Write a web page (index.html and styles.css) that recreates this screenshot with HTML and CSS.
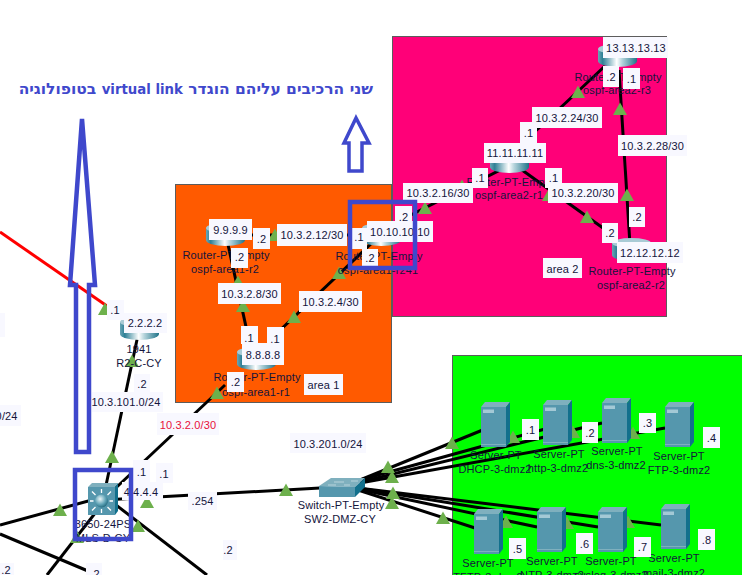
FILE: index.html
```html
<!DOCTYPE html>
<html lang="he">
<head>
<meta charset="utf-8">
<title>OSPF virtual link topology</title>
<link rel="stylesheet" href="styles.css">
</head>
<body>
<svg class="canvas" xmlns="http://www.w3.org/2000/svg" width="742" height="575" viewBox="0 0 742 575">
  <defs>
    <linearGradient id="cyl" x1="0" x2="1" y1="0" y2="0">
      <stop offset="0" stop-color="#6aa6b6"/>
      <stop offset="0.12" stop-color="#2f8096"/>
      <stop offset="0.48" stop-color="#ffffff"/>
      <stop offset="0.62" stop-color="#b5d4dc"/>
      <stop offset="1" stop-color="#1f7389"/>
    </linearGradient>
    <radialGradient id="ball" cx="0.4" cy="0.35" r="0.7">
      <stop offset="0" stop-color="#e8f4f7"/>
      <stop offset="0.6" stop-color="#5fa3b6"/>
      <stop offset="1" stop-color="#1f6479"/>
    </radialGradient>
    <symbol id="router" width="39" height="24" viewBox="0 0 39 24">
      <path class="cyl-body" d="M0 5V17A19.5 6 0 0 0 39 17V5Z"/>
      <ellipse class="cyl-top" cx="19.5" cy="5" rx="19.5" ry="5"/>
    </symbol>
    <symbol id="server" width="29" height="46" viewBox="0 0 29 46">
      <path class="face-top" d="M0 5L4 0H29L25 5Z"/>
      <path class="face-side" d="M25 5L29 0V40L25 45Z"/>
      <rect class="face-front" x="0" y="5" width="25" height="40"/>
      <rect class="face-shine" x="2" y="7.500" width="11" height="3.500"/>
      <rect class="face-strip" x="0" y="42" width="25" height="1"/>
    </symbol>
    <symbol id="tri" class="tri-sym" width="12" height="11" viewBox="0 0 12 11">
      <path class="tri" d="M6 -1.500L13 11H-1Z"/>
    </symbol>
  </defs>

  <!-- Area boxes -->
  <rect class="area area-pink" x="392.500" y="36.500" width="274" height="280"/>
  <rect class="area area-orange" x="175.500" y="184.500" width="216" height="218"/>
  <rect class="area area-green" x="452.500" y="355.500" width="295" height="225"/>

  <!-- Links -->
  <g class="links">
    <line class="red" x1="0" y1="232" x2="107" y2="306"/>
    <line x1="605" y1="66" x2="510" y2="155"/>
    <line x1="619" y1="70" x2="630" y2="245"/>
    <line x1="515" y1="165" x2="603" y2="228"/>
    <line x1="510" y1="165" x2="385" y2="228"/>
    <line x1="228" y1="235" x2="380" y2="235"/>
    <line x1="227" y1="240" x2="250" y2="345"/>
    <line x1="275" y1="335" x2="375" y2="240"/>
    <line x1="225" y1="385" x2="103" y2="500"/>
    <line x1="138" y1="335" x2="105" y2="490"/>
    <line x1="103" y1="500" x2="320" y2="488"/>
    <line x1="0" y1="525" x2="103" y2="497"/>
    <line x1="0" y1="534" x2="88" y2="571"/>
    <line x1="47" y1="575" x2="103" y2="503"/>
    <line x1="103" y1="495" x2="207" y2="575"/>
    <line x1="360" y1="480" x2="495" y2="425"/>
    <line x1="360" y1="480" x2="545" y2="429"/>
    <line x1="360" y1="482" x2="602" y2="423"/>
    <line x1="360" y1="483" x2="665" y2="428"/>
    <line x1="358" y1="490" x2="475" y2="528"/>
    <line x1="358" y1="489" x2="537" y2="527"/>
    <line x1="358" y1="488" x2="598" y2="527"/>
    <line x1="358" y1="488" x2="661" y2="525"/>
  </g>

  <!-- Link status markers -->
  <g>
    <use href="#tri" x="572" y="87"/>
    <use href="#tri" x="614" y="104"/>
    <use href="#tri" x="621" y="190"/>
    <use href="#tri" x="581" y="212"/>
    <use href="#tri" x="419" y="203"/>
    <use href="#tri" x="456" y="181"/>
    <use href="#tri" x="543" y="190"/>
    <use href="#tri" x="333" y="268"/>
    <use href="#tri" x="232" y="277"/>
    <use href="#tri" x="237" y="301"/>
    <use href="#tri" x="288" y="312"/>
    <use href="#tri" x="269" y="230"/>
    <use href="#tri" x="211" y="388"/>
    <use href="#tri" x="99" y="304"/>
    <use href="#tri" x="126" y="356"/>
    <use href="#tri" x="106" y="452"/>
    <use href="#tri" x="54" y="505"/>
    <use href="#tri" x="132" y="521"/>
    <use href="#tri" x="71" y="532"/>
    <use href="#tri" x="131" y="462"/>
    <use href="#tri" x="141" y="497"/>
    <use href="#tri" x="280" y="485"/>
    <use href="#tri" x="446" y="438"/>
    <use href="#tri" x="382" y="462"/>
    <use href="#tri" x="386" y="472"/>
    <use href="#tri" x="387" y="488"/>
    <use href="#tri" x="386" y="498"/>
    <use href="#tri" x="437" y="513"/>
    <use href="#tri" x="507" y="432"/>
    <use href="#tri" x="567" y="427"/>
    <use href="#tri" x="627" y="428"/>
    <use href="#tri" x="500" y="517"/>
    <use href="#tri" x="561" y="518"/>
    <use href="#tri" x="622" y="517"/>
  </g>

  <!-- Routers -->
  <use href="#router" x="598" y="44"/>
  <use href="#router" x="490" y="150"/>
  <use href="#router" x="612" y="238"/>
  <use href="#router" x="362" y="223"/>
  <use href="#router" x="206" y="223"/>
  <use href="#router" x="237" y="347"/>
  <use href="#router" x="120" y="317"/>

  <!-- Multilayer switch -->
  <g>
    <path class="face-top" d="M88 487L92 483H118L115 487Z"/>
    <path class="face-side" d="M115 487L118 483V511L115 515Z"/>
    <rect class="face-front" x="88" y="487" width="27" height="28"/>
    <circle class="ball" cx="101.500" cy="501" r="6.500"/>
    <g class="rays">
      <path d="M101.500 493V489M101.500 509V513M93.500 501H90M109.500 501H113M95.500 495L92 491.500M107.500 495L111 491.500M95.500 507L92 510.500M107.500 507L111 510.500"/>
    </g>
  </g>

  <!-- Switch -->
  <g>
    <path class="face-top" d="M319 486L331 478H365L355 487Z"/>
    <path class="face-side" d="M355 487L365 478V487L355 497Z"/>
    <path class="face-front" d="M319 486L355 487V497H319Z"/>
    <path class="sw-ports" d="M334 482H344M351 481H358M328 485H336M344 485H350"/>
  </g>

  <!-- Servers -->
  <use href="#server" x="481" y="402"/>
  <use href="#server" x="543" y="400"/>
  <use href="#server" x="602" y="398"/>
  <use href="#server" x="665" y="402"/>
  <use href="#server" x="474" y="509"/>
  <use href="#server" x="537" y="507"/>
  <use href="#server" x="598" y="507"/>
  <use href="#server" x="661" y="504"/>

  <!-- Device names -->
  <g class="name">
    <text x="618" y="81">Router-PT-Empty</text>
    <text x="617" y="94">ospf-area2-r3</text>
    <text x="510" y="186">Router-PT-Empty</text>
    <text x="509" y="199">ospf-area2-r1</text>
    <text x="632" y="275">Router-PT-Empty</text>
    <text x="631" y="289">ospf-area2-r2</text>
    <text x="226" y="259">Router-PT-Empty</text>
    <text x="225" y="273">ospf-area1-r2</text>
    <text x="379" y="260">Router-PT-Empty</text>
    <text x="378" y="274">ospf-area1-r241</text>
    <text x="257" y="381">Router-PT-Empty</text>
    <text x="256" y="396">ospf-area1-r1</text>
    <text x="139" y="353">1941</text>
    <text x="139" y="367">R2-C-CY</text>
    <text x="103" y="528">3650-24PS</text>
    <text x="103" y="542">MLS-D-CY</text>
    <text x="341" y="509">Switch-PT-Empty</text>
    <text x="340" y="523">SW2-DMZ-CY</text>
    <text x="496" y="459">Server-PT</text>
    <text x="495" y="473">DHCP-3-dmz2</text>
    <text x="559" y="458">Server-PT</text>
    <text x="558" y="472">http-3-dmz2</text>
    <text x="617" y="455">Server-PT</text>
    <text x="616" y="469">dns-3-dmz2</text>
    <text x="679" y="460">Server-PT</text>
    <text x="679" y="474">FTP-3-dmz2</text>
    <text x="488" y="567">Server-PT</text>
    <text x="488" y="581">TFTP-3-dmz2</text>
    <text x="552" y="565">Server-PT</text>
    <text x="552" y="579">NTP-3-dmz2</text>
    <text x="611" y="565">Server-PT</text>
    <text x="611" y="579">syslog-3-dmz2</text>
    <text x="674" y="562">Server-PT</text>
    <text x="674" y="577">mail-3-dmz2</text>
  </g>

  <!-- Address labels -->
  <g class="labels">
    <g><rect x="603" y="37" width="65" height="21"/><text x="636" y="52">13.13.13.13</text></g>
    <g><rect x="603" y="66" width="16" height="21"/><text x="611" y="81">.2</text></g>
    <g><rect x="623" y="68" width="17" height="21"/><text x="631.500" y="83">.1</text></g>
    <g><rect x="532" y="107" width="70" height="21"/><text x="567" y="122">10.3.2.24/30</text></g>
    <g><rect x="520" y="122" width="17" height="21"/><text x="528.500" y="137">.1</text></g>
    <g><rect x="484" y="143" width="62" height="20"/><text x="515" y="157">11.11.11.11</text></g>
    <g><rect x="618" y="135" width="69" height="21"/><text x="652.500" y="150">10.3.2.28/30</text></g>
    <g><rect x="472" y="168" width="16" height="20"/><text x="480" y="182">.1</text></g>
    <g><rect x="545" y="168" width="17" height="20"/><text x="553.500" y="182">.1</text></g>
    <g><rect x="403" y="183" width="70" height="20"/><text x="438" y="197">10.3.2.16/30</text></g>
    <g><rect x="548" y="183" width="70" height="20"/><text x="583" y="197">10.3.2.20/30</text></g>
    <g><rect x="395" y="206" width="17" height="21"/><text x="403.500" y="221">.2</text></g>
    <g><rect x="367" y="221" width="66" height="21"/><text x="400" y="236">10.10.10.10</text></g>
    <g><rect x="602" y="223" width="16" height="20"/><text x="610" y="237">.2</text></g>
    <g><rect x="629" y="207" width="16" height="20"/><text x="637" y="221">.2</text></g>
    <g><rect x="617" y="242" width="66" height="21"/><text x="650" y="257">12.12.12.12</text></g>
    <g><rect x="543" y="258" width="39" height="20"/><text x="562.500" y="273">area 2</text></g>

    <g><rect x="209" y="219" width="43" height="21"/><text x="230.500" y="234">9.9.9.9</text></g>
    <g><rect x="253" y="228" width="17" height="21"/><text x="261.500" y="243">.2</text></g>
    <g><rect x="277" y="224" width="70" height="22"/><text x="312" y="239">10.3.2.12/30</text></g>
    <g><rect x="350" y="228" width="17" height="21"/><text x="359" y="241">.1</text></g>
    <g><rect x="231" y="248" width="17" height="20"/><text x="239.500" y="261">.2</text></g>
    <g><rect x="362" y="249" width="16" height="19"/><text x="370" y="262">.2</text></g>
    <g><rect x="218" y="283" width="63" height="21"/><text x="249.500" y="298">10.3.2.8/30</text></g>
    <g><rect x="299" y="291" width="63" height="21"/><text x="330.500" y="306">10.3.2.4/30</text></g>
    <g><rect x="241" y="326" width="17" height="18"/><text x="249" y="342">.1</text></g>
    <g><rect x="267" y="327" width="17" height="18"/><text x="275" y="343">.1</text></g>
    <g><rect x="242" y="343" width="42" height="22"/><text x="263" y="359">8.8.8.8</text></g>
    <g><rect x="227" y="372" width="17" height="20"/><text x="235.500" y="386">.2</text></g>
    <g><rect x="304" y="374" width="39" height="21"/><text x="323.500" y="389">area 1</text></g>

    <g><rect x="-10" y="313" width="15" height="24"/></g>
    <g><rect x="107" y="300" width="17" height="20"/><text x="115" y="314">.1</text></g>
    <g><rect x="124" y="313" width="43" height="20"/><text x="145" y="327">2.2.2.2</text></g>
    <g><rect x="134" y="374" width="16" height="18"/><text x="142" y="388">.2</text></g>
    <g><rect x="92" y="392" width="71" height="20"/><text x="126" y="406">10.3.101.0/24</text></g>
    <g><rect x="-50" y="405" width="71" height="21"/><text x="-17" y="420">10.3.101.0/24</text></g>
    <g class="hot"><rect x="157" y="413" width="62" height="22"/><text x="188" y="429">10.3.2.0/30</text></g>
    <g><rect x="133" y="460" width="17" height="22"/><text x="141.500" y="476">.1</text></g>
    <g><rect x="156" y="463" width="17" height="20"/><text x="164" y="478">.1</text></g>
    <g><rect x="122" y="482" width="41" height="18"/><text x="141" y="496">4.4.4.4</text></g>
    <g><rect x="188" y="492" width="29" height="18"/><text x="202.500" y="505">.254</text></g>
    <g><rect x="223" y="540" width="14" height="20"/><text x="228" y="554">.2</text></g>
    <g><rect x="-5" y="563" width="19" height="20"/><text x="6" y="574">.2</text></g>
    <g><rect x="86" y="563" width="16" height="20"/><text x="95" y="578">.2</text></g>
    <g><rect x="290" y="433" width="76" height="20"/><text x="328" y="448">10.3.201.0/24</text></g>

    <g><rect x="522" y="419" width="17" height="21"/><text x="530.500" y="434">.1</text></g>
    <g><rect x="582" y="422" width="16" height="21"/><text x="590" y="437">.2</text></g>
    <g><rect x="639" y="413" width="17" height="20"/><text x="647.500" y="427">.3</text></g>
    <g><rect x="703" y="427" width="17" height="21"/><text x="711.500" y="442">.4</text></g>
    <g><rect x="509" y="538" width="17" height="21"/><text x="517.500" y="553">.5</text></g>
    <g><rect x="576" y="533" width="17" height="21"/><text x="584.500" y="548">.6</text></g>
    <g><rect x="634" y="537" width="17" height="20"/><text x="642.500" y="551">.7</text></g>
    <g><rect x="698" y="529" width="17" height="21"/><text x="706.500" y="544">.8</text></g>
  </g>

  <!-- Annotations drawn on top of the screenshot -->
  <g class="ink">
    <rect x="350" y="202" width="65" height="66"/>
    <rect x="75" y="470" width="56" height="69"/>
    <path d="M82 119L70 285H76V452H89V285H95Z"/>
    <path class="ink-thin" d="M356 118L344 143H349V171H362V143H369Z"/>
  </g>
  <text class="heading" x="373" y="94" direction="rtl">שני הרכיבים עליהם הוגדר <tspan class="heading-latin">virtual link</tspan> בטופולוגיה</text>
</svg>
</body>
</html>
```

FILE: styles.css
```css
html, body {
  margin: 0;
  padding: 0;
  background: #ffffff;
  overflow: hidden;
}

.canvas {
  display: block;
}

.area {
  stroke: #5c5c5c;
  stroke-width: 1;
}
.area-pink { fill: #ff0078; }
.area-orange { fill: #ff5a00; }
.area-green { fill: #00ff00; }

.links line {
  stroke: #000000;
  stroke-width: 3;
}
.links .red {
  stroke: #ff0000;
}

.tri-sym { overflow: visible; }
.tri { fill: #6db04c; }

.cyl-body { fill: url(#cyl); }
.cyl-top { fill: #a9cbd5; }

.face-top { fill: #7fb0be; }
.face-side { fill: #12708c; }
.face-front { fill: #5597ad; }
.face-shine { fill: #a3c9d5; }
.face-strip { fill: #7fb0be; }

.ball { fill: url(#ball); }
.rays path {
  stroke: #ffffff;
  stroke-width: 1.300;
  fill: none;
}
.sw-ports {
  stroke: #b8d4dc;
  stroke-width: 1;
  fill: none;
}

.name text,
.labels text {
  font-family: "Liberation Sans", Arial, sans-serif;
  font-size: 11px;
  letter-spacing: 0.15px;
  text-anchor: middle;
  fill: #14143c;
}

.labels rect {
  fill: #f8f8ff;
}
.labels .hot text {
  fill: #e8103a;
}

.ink rect,
.ink path {
  fill: none;
  stroke: #3f48cc;
  stroke-width: 4.500;
}
.ink .ink-thin {
  stroke-width: 3.500;
}

.heading {
  font-family: "DejaVu Sans", sans-serif;
  font-size: 15.500px;
  font-weight: 700;
  fill: #3f48cc;
}
.heading-latin {
  font-size: 13.300px;
}
```
